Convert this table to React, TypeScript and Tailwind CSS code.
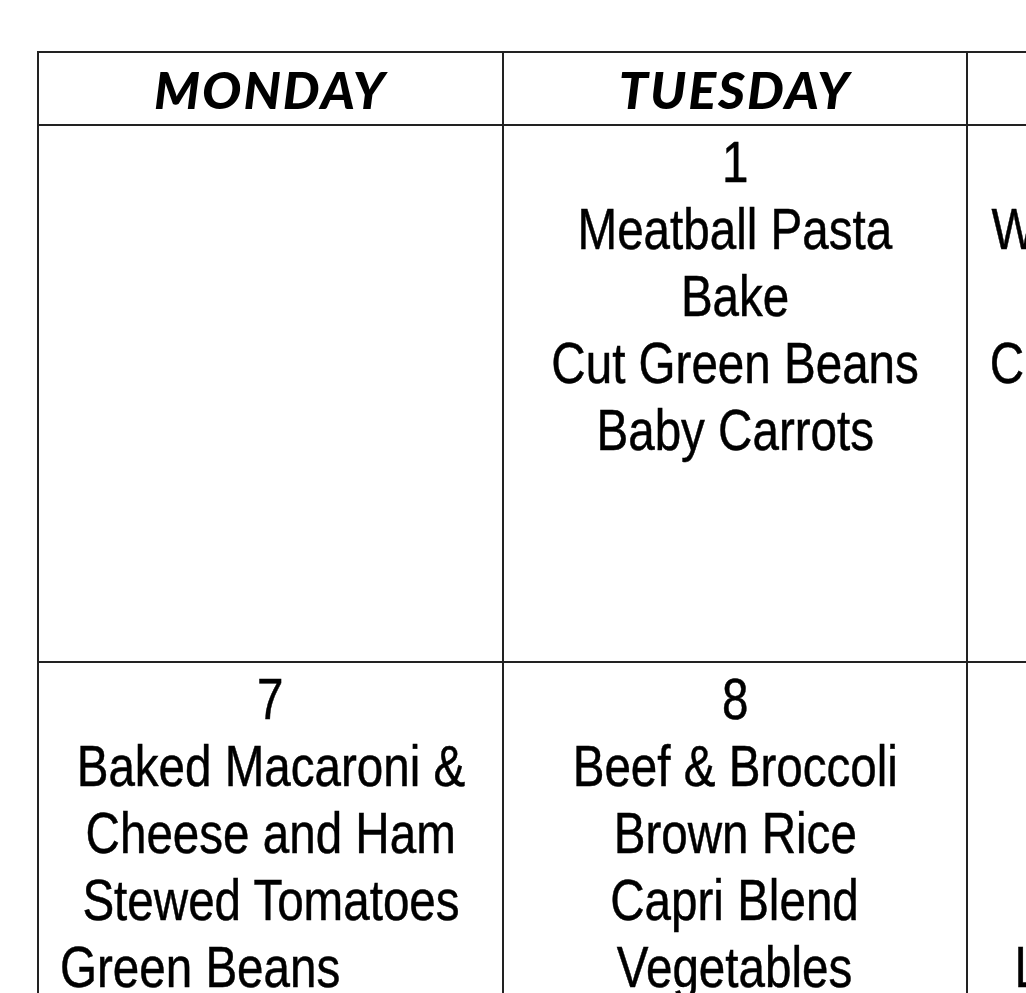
import React from "react";

const headFont = { fontFamily: 'Lato, "Open Sans", sans-serif' };

type Line = { text: string; left?: boolean };

const Cell = ({ lines }: { lines: Line[] }) => (
  <div className="border-r-2 border-b-2 border-[#222] pt-[2px] flex flex-col items-center text-[58px] leading-[67px] text-black font-['Liberation_Sans','Arial',sans-serif] [-webkit-text-stroke:0.5px_#000] whitespace-nowrap overflow-hidden">
    {lines.map((l, i) =>
      l.left ? (
        <div key={i} className="self-start pl-[21px]">
          <div className="w-max scale-x-[0.82] origin-left">{l.text}</div>
        </div>
      ) : (
        <div key={i} className="w-max scale-x-[0.82] shrink-0">
          {l.text}
        </div>
      )
    )}
  </div>
);

const Head = ({ children }: { children?: React.ReactNode }) => (
  <div
    className="h-[73px] border-r-2 border-b-2 border-[#222] flex items-center justify-center pt-[1px] text-[52px] tracking-[2px] font-black italic text-black"
    style={headFont}
  >
    {children}
  </div>
);

export default function App() {
  const t = (s: string): Line => ({ text: s });
  return (
    <div className="w-full h-[993px] overflow-hidden bg-white">
      <div className="pt-[51px] pl-[37px]">
        <div className="grid grid-cols-[465px_464px_464px] w-[1395px] border-l-2 border-t-2 border-[#222] grid-rows-[73px_537px_400px]">
          <Head>MONDAY</Head>
          <Head>TUESDAY</Head>
          <Head>WEDNESDAY</Head>
          <Cell lines={[]} />
          <Cell
            lines={[
              t("1"),
              t("Meatball Pasta"),
              t("Bake"),
              t("Cut Green Beans"),
              t("Baby Carrots"),
            ]}
          />
          <Cell
            lines={[
              t("2"),
              t("Whole Wheat Pizza"),
              t("Sweet Corn"),
              t("Chilled Mixed Fruits"),
            ]}
          />
          <Cell
            lines={[
              t("7"),
              t("Baked Macaroni &"),
              t("Cheese and Ham"),
              t("Stewed Tomatoes"),
              { text: "Green Beans", left: true },
            ]}
          />
          <Cell
            lines={[
              t("8"),
              t("Beef & Broccoli"),
              t("Brown Rice"),
              t("Capri Blend"),
              t("Vegetables"),
            ]}
          />
          <Cell
            lines={[
              t("9"),
              t("Beef Tacos"),
              t("Spanish Rice"),
              t("Refried Beans"),
              t("Lettuce & Tomato"),
            ]}
          />
        </div>
      </div>
    </div>
  );
}
